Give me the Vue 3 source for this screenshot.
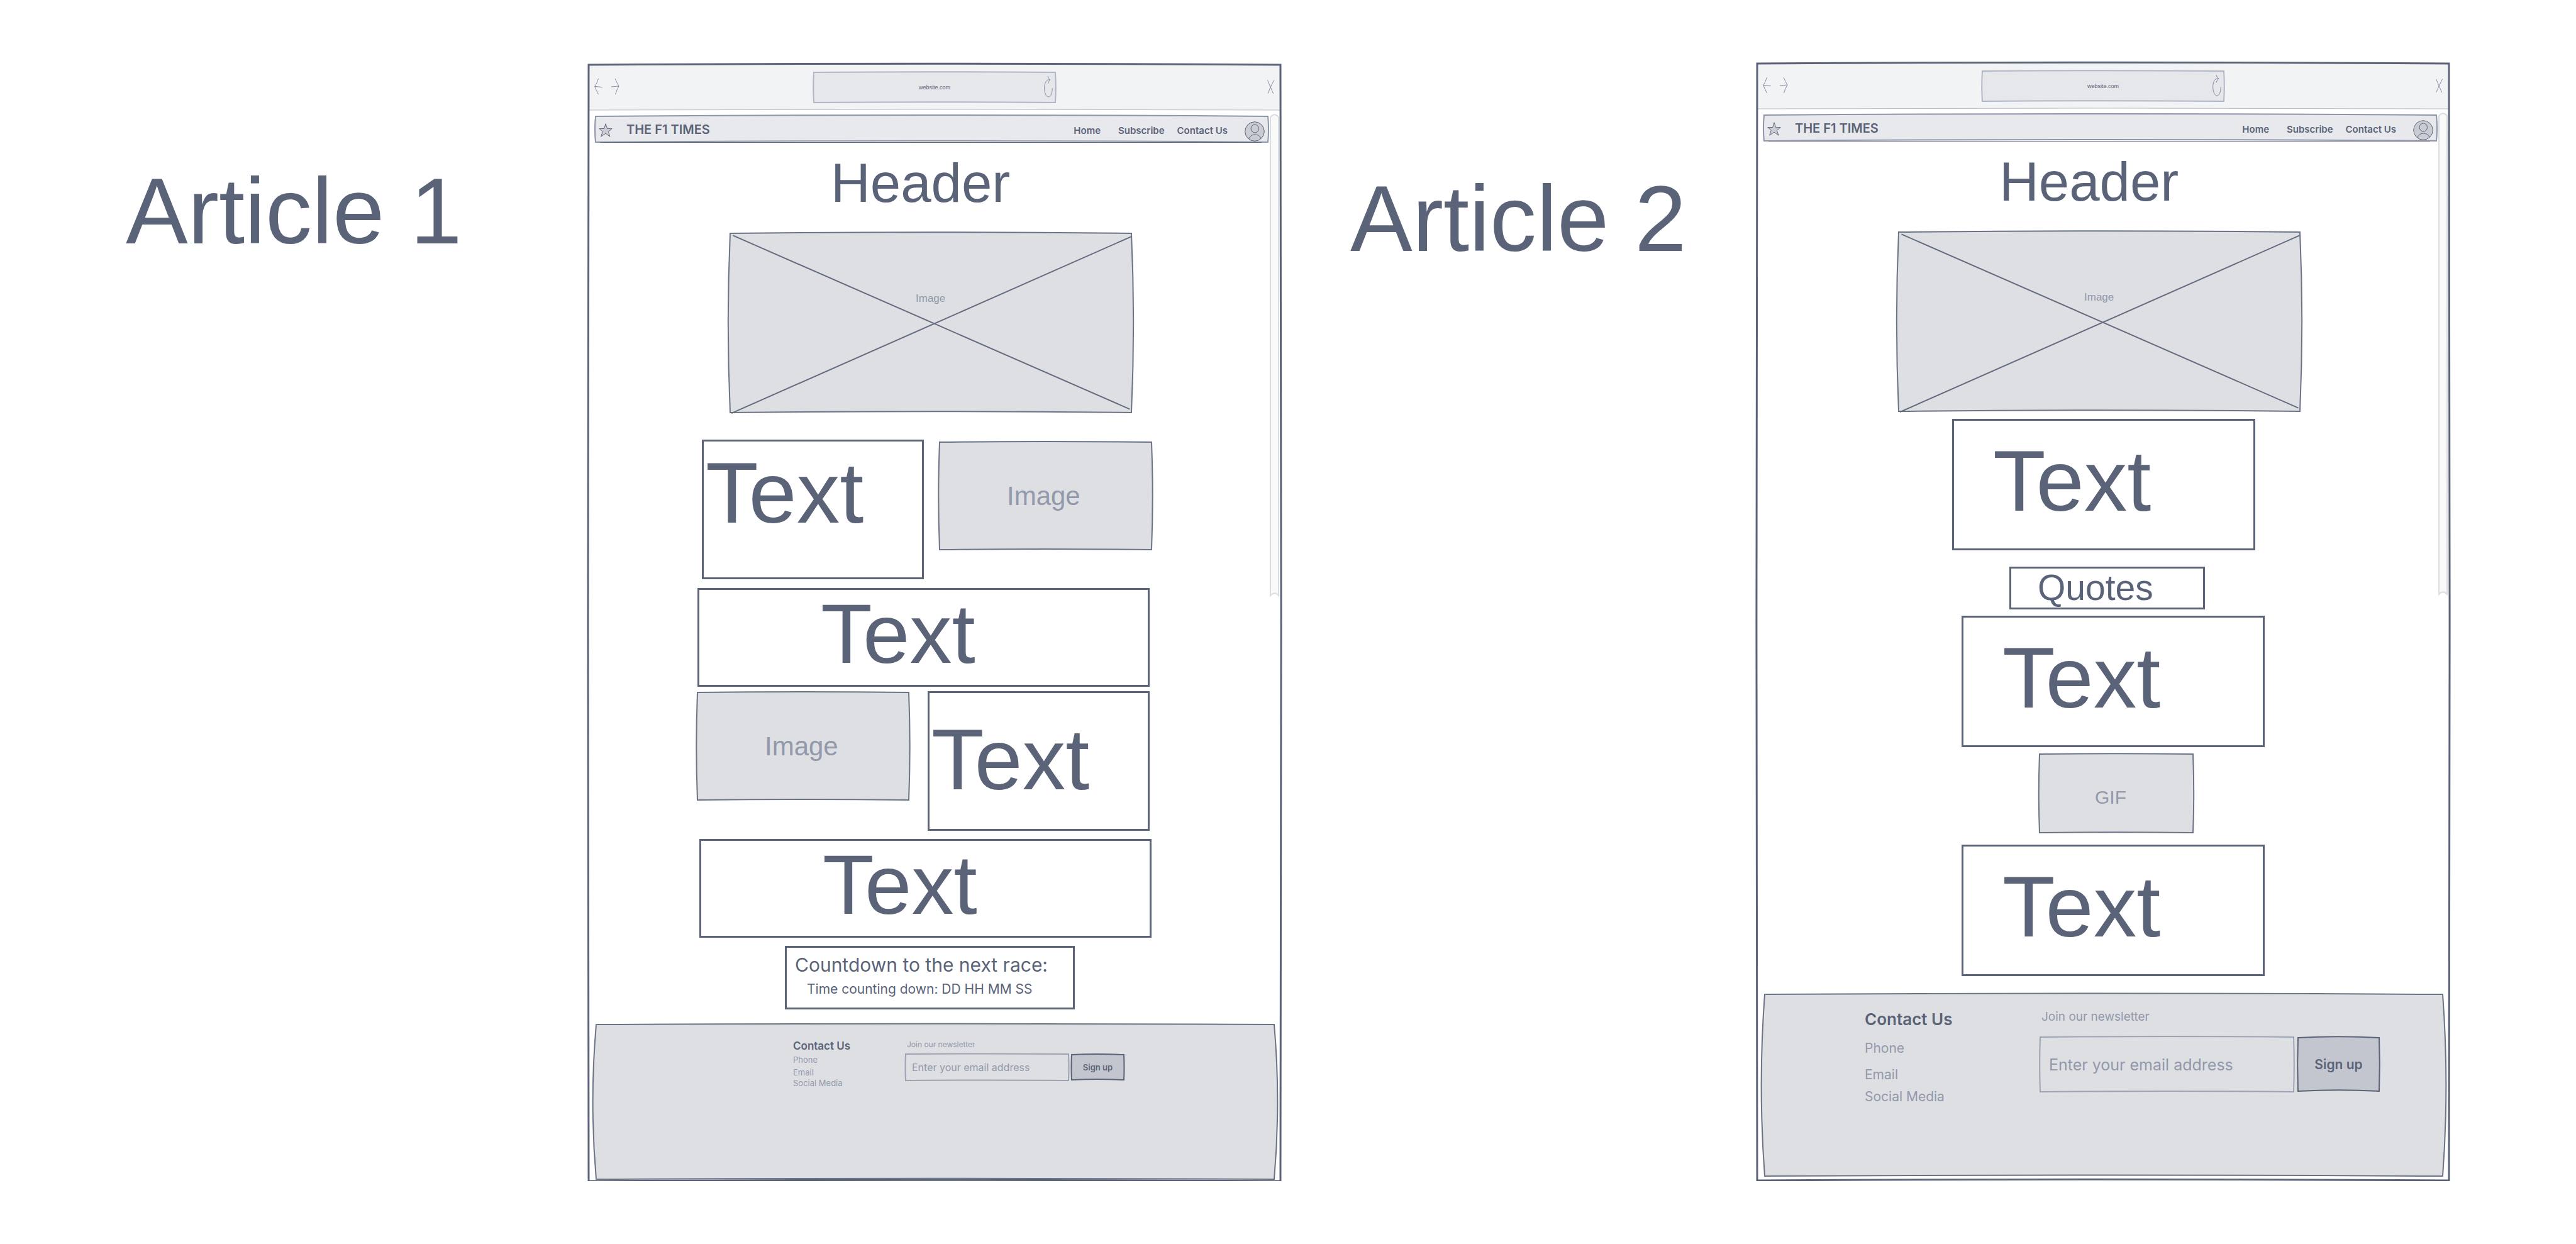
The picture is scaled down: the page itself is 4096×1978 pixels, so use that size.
<script setup>
import { h } from 'vue'

// Hand-drawn rectangle stretched over its host; bx / by are how far the
// sides and the top and bottom bend, in thousandths of the host's size.
function Sketch({ bx = 0, by = 0 }) {
  const x = Number(bx) * 2
  const y = Number(by) * 2
  const d =
    `M0 0 Q500 ${-y} 1000 0 Q${1000 + x} 500 1000 1000 ` +
    `Q500 ${1000 - y} 0 1000 Q${-x} 500 0 0 Z`
  return h('svg', { viewBox: '0 0 1000 1000', preserveAspectRatio: 'none', 'aria-hidden': 'true' }, [
    h('path', { d, 'vector-effect': 'non-scaling-stroke' })
  ])
}
Sketch.props = ['bx', 'by']

const articles = [
  { id: 1, title: 'Article 1' },
  { id: 2, title: 'Article 2' }
]
const contacts = ['Phone', 'Email', 'Social Media']
</script>

<template>
  <main class="board">
    <template v-for="article in articles" :key="article.id">
      <h1 class="title" :class="'title-' + article.id">{{ article.title }}</h1>

      <section class="frame" :class="'frame-' + article.id">
        <Sketch class="sketch outline" bx="1" by="1" />

        <div class="browser">
          <Sketch class="sketch chrome-fill" by="14" />
          <div class="arrows">
            <button type="button" class="icon" aria-label="Back">
              <svg width="13" height="25" viewBox="0 0 13 25">
                <path d="M6.5 0 Q4 8 .7 12.6 Q3 18 6.5 25 M.7 12.3 L12.7 13.7" />
              </svg>
            </button>
            <button type="button" class="icon" aria-label="Forward">
              <svg width="13" height="25" viewBox="0 0 13 25">
                <path d="M6 0 Q9 7 12 12 Q8.500 18 6.500 25 M0 13 L12 12" />
              </svg>
            </button>
          </div>
          <div class="address">
            <Sketch class="sketch address-fill" bx="2" by="18" />
            <input type="text" class="url" value="website.com" aria-label="Address" />
            <button type="button" class="icon reload" aria-label="Reload">
              <svg width="14" height="34" viewBox="0 0 14 34">
                <path d="M6 0 Q7 4 9.800 6.200 Q7 8 6.200 12.200 M9.800 6.200 C5 4 .7 10 .7 19 C.7 27 3.500 33 7 33 C11 33 13.200 27 13.200 19.300" />
              </svg>
            </button>
          </div>
          <button type="button" class="icon close" aria-label="Close">
            <svg width="11" height="22" viewBox="0 0 11 22">
              <path d="M.5 .5 L9.700 22 M10.700 .5 Q5 11 1 21.500" />
            </svg>
          </button>
        </div>

        <div class="navrow">
          <header class="nav">
            <Sketch class="sketch nav-fill" bx="1" by="50" />
            <svg class="star" width="22" height="22" viewBox="0 0 22 22" aria-hidden="true">
              <path d="M11 .8 L13.700 8.700 L21.200 8.500 L15.300 13.400 L18 21.200 L11 16.200 L3.700 21.200 L6.200 13.200 L.8 8.500 L8.600 8.500 Z" />
            </svg>
            <span class="brand">THE F1 TIMES</span>
            <nav class="links">
              <a href="#home">Home</a>
              <a href="#subscribe">Subscribe</a>
              <a href="#contact">Contact Us</a>
            </nav>
            <svg class="avatar" width="32" height="32" viewBox="0 0 32 32" aria-hidden="true">
              <circle cx="16" cy="16" r="15.300" />
              <ellipse cx="16.300" cy="11.500" rx="6.200" ry="6.500" />
              <path d="M6.500 28 Q9.500 21 16.500 21 Q23.500 21 26 27" />
            </svg>
          </header>
          <div class="scroll">
            <svg class="sketch scroll-fill" viewBox="0 0 13 1000" preserveAspectRatio="none" aria-hidden="true">
              <path d="M0 4 Q7 -6 13 4 L13 1000 Q7 990 0 1000 Z" vector-effect="non-scaling-stroke" />
            </svg>
          </div>
        </div>

        <h2 class="heading">Header</h2>

        <div class="row hero-row">
          <div class="picture hero">
            <Sketch class="sketch grey" bx="5" by="6" />
            <svg class="sketch cross" viewBox="0 0 1000 1000" preserveAspectRatio="none" aria-hidden="true">
              <path d="M7 12 L996 981 M1000 18 L3 1004" vector-effect="non-scaling-stroke" />
            </svg>
            <span>Image</span>
          </div>
        </div>

        <template v-if="article.id === 1">
          <div class="row pair-a">
            <p class="box">Text</p>
            <div class="picture tile">
              <Sketch class="sketch grey" bx="5" by="6" />
              <span>Image</span>
            </div>
          </div>
          <div class="row wide-a">
            <p class="box wide">Text</p>
          </div>
          <div class="row pair-b">
            <div class="picture tile">
              <Sketch class="sketch grey" bx="5" by="6" />
              <span>Image</span>
            </div>
            <p class="box low">Text</p>
          </div>
          <div class="row wide-b">
            <p class="box wide">Text</p>
          </div>
          <div class="row count-row">
            <div class="countdown">
              <p class="count-title">Countdown to the next race:</p>
              <p class="count-time">Time counting down: DD HH MM SS</p>
            </div>
          </div>
        </template>

        <template v-else>
          <div class="row body-a">
            <p class="box body">Text</p>
          </div>
          <div class="row quote-row">
            <p class="box quotes">Quotes</p>
          </div>
          <div class="row body-b">
            <p class="box body">Text</p>
          </div>
          <div class="row gif-row">
            <div class="picture gif">
              <Sketch class="sketch grey" bx="5" by="6" />
              <span>GIF</span>
            </div>
          </div>
          <div class="row body-c">
            <p class="box body">Text</p>
          </div>
        </template>

        <footer class="footer">
          <Sketch class="sketch grey" bx="5" by="5" />
          <div class="contact">
            <h3>Contact Us</h3>
            <p v-for="item in contacts" :key="item">{{ item }}</p>
          </div>
          <form class="newsletter" @submit.prevent>
            <label :for="'email-' + article.id">Join our newsletter</label>
            <div class="fields">
              <div class="field">
                <Sketch class="sketch field-line" bx="2" by="12" />
                <input :id="'email-' + article.id" type="email" placeholder="Enter your email address" />
              </div>
              <button type="submit" class="signup">
                <Sketch class="sketch signup-fill" bx="6" by="22" />
                Sign up
              </button>
            </div>
          </form>
        </footer>
      </section>
    </template>
  </main>
</template>

<style>
body {
  margin: 0;
  background: #fff;
}
</style>

<style scoped>
.board {
  display: grid;
  grid-template-columns: 936fr 1100fr 758fr 1100fr 202fr;
  align-items: start;
  font-family: "Liberation Sans", Arial, sans-serif;
  color: #5a6377;
}

h1, h2, h3, p {
  margin: 0;
  font-weight: 400;
}

button, input {
  border: 0;
  padding: 0;
  margin: 0;
  background: transparent;
  font-family: inherit;
  color: inherit;
  min-width: 0;
}

.title {
  font-size: 148px;
  line-height: 160px;
  white-space: nowrap;
}
.title-1 { padding: 256px 0 0 200px; }
.title-2 { padding: 268px 0 0 111px; }

.frame {
  position: relative;
  display: flex;
  flex-direction: column;
  isolation: isolate;
}
.frame-1 { margin-top: 103px; padding-bottom: 3px; }
.frame-2 { margin-top: 101px; padding-bottom: 7px; }

.sketch {
  position: absolute;
  inset: 0;
  width: 100%;
  height: 100%;
  overflow: visible;
  z-index: -1;
  pointer-events: none;
}
.outline { z-index: 1; fill: none; stroke: #5a6377; stroke-width: 3px; }
.chrome-fill { fill: #f2f3f5; stroke: #b5bbc7; stroke-width: 1px; }
.address-fill { fill: #e6e7eb; stroke: #b0b7c4; stroke-width: 2px; }
.nav-fill { fill: #e8e9ed; stroke: #8d96a8; stroke-width: 2px; }
.scroll-fill { fill: #f9f9fa; stroke: #dcdde2; stroke-width: 2px; }
.grey { fill: #dedfe3; stroke: #6b7386; stroke-width: 2px; }
.cross { fill: none; stroke: #646c80; stroke-width: 2px; }
.field-line { fill: none; stroke: #9ca4b4; stroke-width: 2px; }
.signup-fill { fill: #c3c6cf; stroke: #5a6377; stroke-width: 2px; }

/* browser bar */
.browser {
  position: relative;
  isolation: isolate;
  display: grid;
  grid-template-columns: 358fr 384fr 358fr;
  align-items: center;
  height: 72px;
}
.arrows {
  display: flex;
  gap: 14px;
  padding-left: 9px;
  margin-bottom: 3px;
}
.icon {
  display: flex;
}
.icon svg {
  fill: none;
  stroke: #848c9f;
  stroke-width: 1px;
  overflow: visible;
}
.address {
  position: relative;
  isolation: isolate;
  display: flex;
  align-items: center;
  height: 48px;
}
.url {
  flex: 1;
  padding-left: 18px;
  height: 48px;
  text-align: center;
  font-size: 9px;
}
.reload {
  margin: 0 4px 3px 0;
}
.close {
  justify-self: end;
  margin: 0 10px 3px 0;
}

/* site bar */
.navrow {
  display: grid;
  grid-template-columns: 11fr 1069fr 4fr 13fr 3fr;
  grid-template-rows: 41px;
  margin-top: 10px;
  height: 41px;
}
.nav {
  grid-column: 2;
  position: relative;
  isolation: isolate;
  display: flex;
  align-items: center;
  padding: 0 5px;
  font-family: Inter, sans-serif;
  font-weight: 600;
}
.nav::after {
  content: "";
  position: absolute;
  left: 7px;
  right: 10px;
  bottom: -1px;
  border-bottom: 1px solid #5a6377;
}
.star {
  margin-top: 2px;
  fill: #c9ccd3;
  stroke: #5f687c;
}
.brand {
  flex: 1;
  padding-left: 22px;
  font-size: 20px;
}
.links {
  display: flex;
  padding: 4px 27px 0 0;
  font-size: 15px;
}
.links a {
  color: inherit;
  text-decoration: none;
}
.links a + a { margin-left: 28px; }
.links a:last-child { margin-left: 20px; }
.avatar {
  margin-top: 6px;
  fill: #c9ccd3;
  stroke: #5a6377;
}
.scroll {
  grid-column: 4;
  position: relative;
  height: 764px;
  margin-top: -2px;
}

.heading {
  margin: 15px 0 0 385px;
  font-size: 87px;
  line-height: 100px;
}

/* content rows */
.row { display: grid; }
.row > * { grid-column: 2; }
.hero-row {
  grid-template-columns: 225fr 638fr 237fr;
  margin-top: 30px;
}
.pair-a {
  grid-template-columns: 180fr 353fr 25fr 337fr 205fr;
  margin-top: 43px;
}
.wide-a {
  grid-template-columns: 173fr 719fr 208fr;
  margin-top: 14px;
}
.pair-b {
  grid-template-columns: 173fr 336fr 30fr 353fr 208fr;
  margin-top: 7px;
}
.pair-a > :last-child, .pair-b > :last-child { grid-column: 4; }
.wide-b {
  grid-template-columns: 176fr 719fr 205fr;
  margin-top: 13px;
}
.count-row {
  grid-template-columns: 312fr 461fr 327fr;
  margin-top: 13px;
}
.body-a {
  grid-template-columns: 310fr 482fr 308fr;
  margin-top: 12px;
}
.quote-row {
  grid-template-columns: 401fr 311fr 388fr;
  margin-top: 26px;
}
.body-b {
  grid-template-columns: 325fr 482fr 293fr;
  margin-top: 10px;
}
.gif-row {
  grid-template-columns: 449fr 244fr 407fr;
  margin-top: 11px;
}
.body-c {
  grid-template-columns: 325fr 482fr 293fr;
  margin-top: 19px;
}

.box {
  box-sizing: border-box;
  height: 222px;
  padding: 12px 0 0 3px;
  border: 3px solid #5a6377;
  font-size: 137px;
  line-height: 140px;
}
.box.low { padding-top: 36px; }
.box.wide {
  height: 157px;
  padding: 0 0 0 193px;
  font-size: 134px;
}
.box.body {
  height: 209px;
  padding: 26px 0 0 62px;
}
.box.quotes {
  height: 68px;
  padding: 0 0 0 42px;
  font-size: 57px;
  line-height: 60px;
}

.picture {
  position: relative;
  isolation: isolate;
  box-sizing: border-box;
  color: #9199ab;
}
.hero {
  height: 285px;
  padding: 94px 0 0 295px;
  font-size: 17px;
  line-height: 20px;
}
.tile {
  height: 171px;
  margin-top: 4px;
  padding: 62px 0 0 107px;
  font-size: 42px;
  line-height: 48px;
}
.pair-b .tile { margin-top: 2px; }
.gif {
  height: 125px;
  padding: 51px 0 0 88px;
  font-size: 30px;
  line-height: 36px;
}

.countdown {
  box-sizing: border-box;
  height: 101px;
  padding: 9px 0 0 13px;
  border: 3px solid #5a6377;
  font-family: Inter, sans-serif;
  white-space: nowrap;
}
.count-title {
  font-size: 30px;
  line-height: 36px;
}
.count-time {
  padding: 7px 0 0 19px;
  font-size: 21px;
  line-height: 28px;
}

/* footer */
.footer {
  position: relative;
  isolation: isolate;
  box-sizing: border-box;
  display: grid;
  margin: 24px 10px 0 12px;
  height: 246px;
  padding-top: 24px;
  grid-template-columns: 313fr 179fr 259fr 5fr 83fr 239fr;
  font-family: Inter, sans-serif;
  color: #9199ab;
  white-space: nowrap;
}
.contact { grid-column: 2; }
.newsletter {
  grid-column: 3 / 6;
  min-width: 0;
}
.contact h3 {
  font-size: 17px;
  line-height: 20px;
  font-weight: 600;
  color: #5a6377;
}
.contact p {
  margin-top: 4px;
  font-size: 13px;
  line-height: 16px;
}
.contact p:last-child { margin-top: 1px; }
.newsletter label {
  display: block;
  padding-left: 2px;
  font-size: 12px;
  line-height: 16px;
}
.fields {
  display: grid;
  grid-template-columns: 259fr 5fr 83fr;
  align-items: center;
  margin-top: 7px;
}
.field {
  position: relative;
  isolation: isolate;
  display: flex;
}
.field input {
  flex: 1;
  height: 42px;
  padding-left: 10px;
  font-size: 16px;
}
.field input::placeholder {
  color: #9199ab;
  opacity: 1;
}
.signup {
  grid-column: 3;
  position: relative;
  isolation: isolate;
  height: 40px;
  font-size: 13px;
  font-weight: 600;
  color: #5a6377;
}

.frame-2 .footer {
  margin-top: 29px;
  height: 289px;
  grid-template-columns: 159fr 279fr 403fr 7fr 129fr 101fr;
}
.frame-2 .contact h3 {
  font-size: 26px;
  line-height: 32px;
}
.frame-2 .contact p {
  margin-top: 18px;
  font-size: 21px;
  line-height: 24px;
}
.frame-2 .contact p:last-child { margin-top: 11px; }
.frame-2 .newsletter label {
  padding-left: 2px;
  font-size: 19px;
  line-height: 24px;
}
.frame-2 .fields {
  margin-top: 20px;
  grid-template-columns: 403fr 7fr 129fr;
}
.frame-2 .field input {
  height: 87px;
  padding-left: 14px;
  font-size: 25px;
}
.frame-2 .signup {
  height: 85px;
  font-size: 21px;
}
</style>
